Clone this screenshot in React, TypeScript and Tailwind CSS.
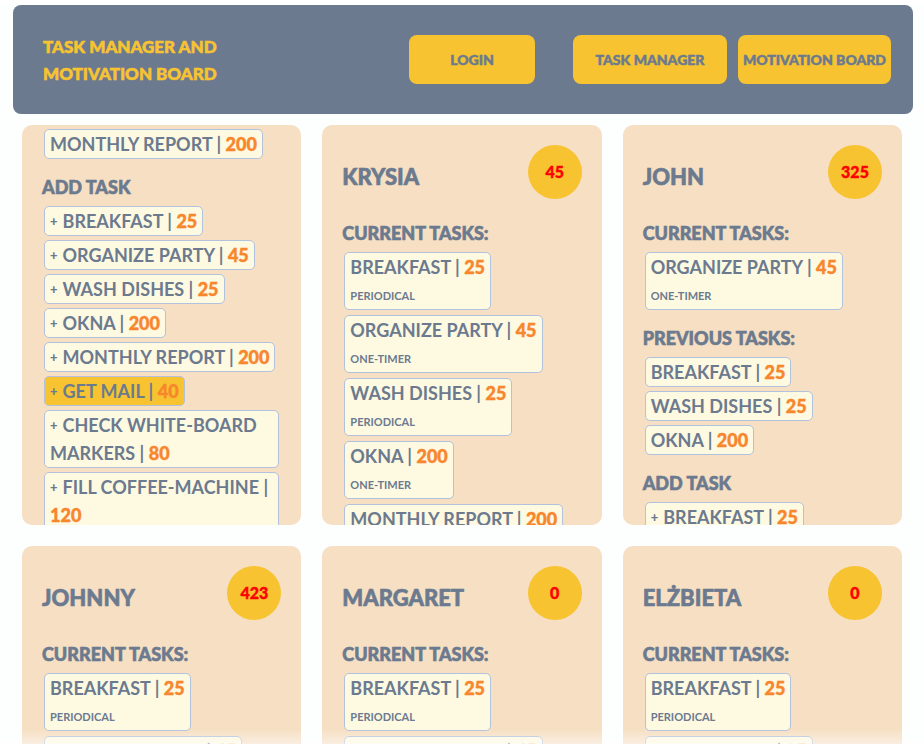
import type { ReactNode } from 'react';

type Task = { name: string; points: number; kind?: string; active?: boolean };

const FONT = { fontFamily: 'Lato, "Noto Sans", sans-serif' };

function Points({ value }: { value: number }) {
  return <span className="font-black text-[#f7862d] [-webkit-text-stroke:0.4px_currentColor]">{value}</span>;
}

function PlainChip({ task, plus }: { task: Task; plus?: boolean }) {
  return (
    <div
      className={`max-w-full rounded-[5px] border border-[#b1c2dc] px-[5px] text-[18px] font-bold leading-[28px] ${
        task.active ? 'bg-[#f7c331]' : 'bg-[#fef9e1]'
      }`}
    >
      {plus && <span className="relative -top-[2px] mr-[5px] text-[13px] leading-[0] font-black">+</span>}
      {task.name} | <Points value={task.points} />
    </div>
  );
}

function CurrentChip({ task }: { task: Task }) {
  return (
    <div className="rounded-[5px] border border-[#b1c2dc] bg-[#fef9e1] px-[5px] pb-[6px]">
      <div className="text-[18px] font-bold leading-[28px]">
        {task.name} | <Points value={task.points} />
      </div>
      <div className="mt-[8px] text-[11px] font-bold leading-[14px]">{task.kind}</div>
    </div>
  );
}

function Heading({ children, first }: { children: ReactNode; first?: boolean }) {
  return (
    <h3
      className={`text-[18px] font-black leading-6 [-webkit-text-stroke:0.6px_currentColor] ${
        first ? 'mt-[22px]' : 'mt-4'
      } mb-[7px]`}
    >
      {children}
    </h3>
  );
}

type Person = {
  name: string;
  score: number;
  current: Task[];
  previous?: Task[];
  add?: Task[];
};

const addTasks: Task[] = [
  { name: 'BREAKFAST', points: 25 },
  { name: 'ORGANIZE PARTY', points: 45 },
  { name: 'WASH DISHES', points: 25 },
  { name: 'OKNA', points: 200 },
  { name: 'MONTHLY REPORT', points: 200 },
  { name: 'GET MAIL', points: 40, active: true },
  { name: 'CHECK WHITE-BOARD MARKERS', points: 80 },
  { name: 'FILL COFFEE-MACHINE', points: 120 },
];

const people: Person[] = [
  {
    name: 'KRYSIA',
    score: 45,
    current: [
      { name: 'BREAKFAST', points: 25, kind: 'PERIODICAL' },
      { name: 'ORGANIZE PARTY', points: 45, kind: 'ONE-TIMER' },
      { name: 'WASH DISHES', points: 25, kind: 'PERIODICAL' },
      { name: 'OKNA', points: 200, kind: 'ONE-TIMER' },
      { name: 'MONTHLY REPORT', points: 200, kind: 'PERIODICAL' },
    ],
  },
  {
    name: 'JOHN',
    score: 325,
    current: [{ name: 'ORGANIZE PARTY', points: 45, kind: 'ONE-TIMER' }],
    previous: [
      { name: 'BREAKFAST', points: 25 },
      { name: 'WASH DISHES', points: 25 },
      { name: 'OKNA', points: 200 },
    ],
    add: addTasks.slice(0, 3),
  },
  {
    name: 'JOHNNY',
    score: 423,
    current: [
      { name: 'BREAKFAST', points: 25, kind: 'PERIODICAL' },
      { name: 'ORGANIZE PARTY', points: 45, kind: 'ONE-TIMER' },
    ],
  },
  {
    name: 'MARGARET',
    score: 0,
    current: [
      { name: 'BREAKFAST', points: 25, kind: 'PERIODICAL' },
      { name: 'ORGANIZE PARTY', points: 45, kind: 'ONE-TIMER' },
    ],
  },
  {
    name: 'ELŻBIETA',
    score: 0,
    current: [
      { name: 'BREAKFAST', points: 25, kind: 'PERIODICAL' },
      { name: 'WASH DISHES', points: 25, kind: 'PERIODICAL' },
    ],
  },
];

function PersonCard({ person }: { person: Person }) {
  return (
    <div className="h-[400px] overflow-hidden rounded-[10px] bg-[#f6dfc2] px-5">
      <div className="flex items-center justify-between pt-5">
        <h2 className="mt-2 text-[22px] font-black [-webkit-text-stroke:0.6px_currentColor]">{person.name}</h2>
        <div className="flex h-[54px] w-[54px] items-center justify-center rounded-full bg-[#f7c331] text-[16px] font-black text-[#ff0000] [-webkit-text-stroke:0.4px_currentColor]">
          {person.score}
        </div>
      </div>
      <Heading first>CURRENT TASKS:</Heading>
      <div className="flex flex-col items-start gap-[5px] pl-[2px]">
        {person.current.map((t) => (
          <CurrentChip key={t.name} task={t} />
        ))}
      </div>
      {person.previous && (
        <>
          <Heading>PREVIOUS TASKS:</Heading>
          <div className="flex flex-col items-start gap-[4px] pl-[2px]">
            {person.previous.map((t) => (
              <PlainChip key={t.name} task={t} />
            ))}
          </div>
        </>
      )}
      {person.add && (
        <>
          <Heading>ADD TASK</Heading>
          <div className="flex flex-col items-start gap-[4px] pl-[2px]">
            {person.add.map((t) => (
              <PlainChip key={t.name} task={t} plus />
            ))}
          </div>
        </>
      )}
    </div>
  );
}

// first card is scrolled down, only its tail is visible
function ScrolledCard() {
  return (
    <div className="h-[400px] overflow-hidden rounded-[10px] bg-[#f6dfc2] px-5 pt-1">
      <div className="flex flex-col items-start pl-[2px]">
        <PlainChip task={{ name: 'MONTHLY REPORT', points: 200 }} />
      </div>
      <Heading>ADD TASK</Heading>
      <div className="flex flex-col items-start gap-[4px] px-[2px] leading-[29px]">
        {addTasks.map((t) => (
          <PlainChip key={t.name} task={t} plus />
        ))}
      </div>
    </div>
  );
}

export default function App() {
  return (
    <div style={FONT} className="min-h-screen bg-[#fdfefe] pb-10 text-[#6b7a8f]">
      <header className="ml-[13px] mr-[11px] mt-[5px] flex h-[109px] items-center rounded-[8px] bg-[#6b7a8f] pl-[30px] pr-[22px]">
        <h1 className="flex-1 text-[17px] font-black leading-[27px] text-[#f7c331] [-webkit-text-stroke:0.6px_currentColor]">
          <span className="block">TASK MANAGER AND</span>
          <span className="block">MOTIVATION BOARD</span>
        </h1>
        <button className="h-[49px] w-[126px] rounded-[8px] bg-[#f7c331] text-[14px] font-black [-webkit-text-stroke:0.5px_currentColor]">
          LOGIN
        </button>
        <button className="ml-[38px] h-[49px] w-[154px] rounded-[8px] bg-[#f7c331] text-[14px] font-black [-webkit-text-stroke:0.5px_currentColor]">
          TASK MANAGER
        </button>
        <button className="ml-[11px] h-[49px] w-[153px] rounded-[8px] bg-[#f7c331] text-[14px] font-black [-webkit-text-stroke:0.5px_currentColor]">
          MOTIVATION BOARD
        </button>
      </header>

      <main className="grid grid-cols-3 gap-[21px] px-[22px] pt-[11px]">
        <ScrolledCard />
        {people.map((p) => (
          <PersonCard key={p.name} person={p} />
        ))}
      </main>

      <div className="pointer-events-none fixed bottom-0 left-0 right-0 h-4 bg-gradient-to-b from-transparent to-white/50" />
    </div>
  );
}
